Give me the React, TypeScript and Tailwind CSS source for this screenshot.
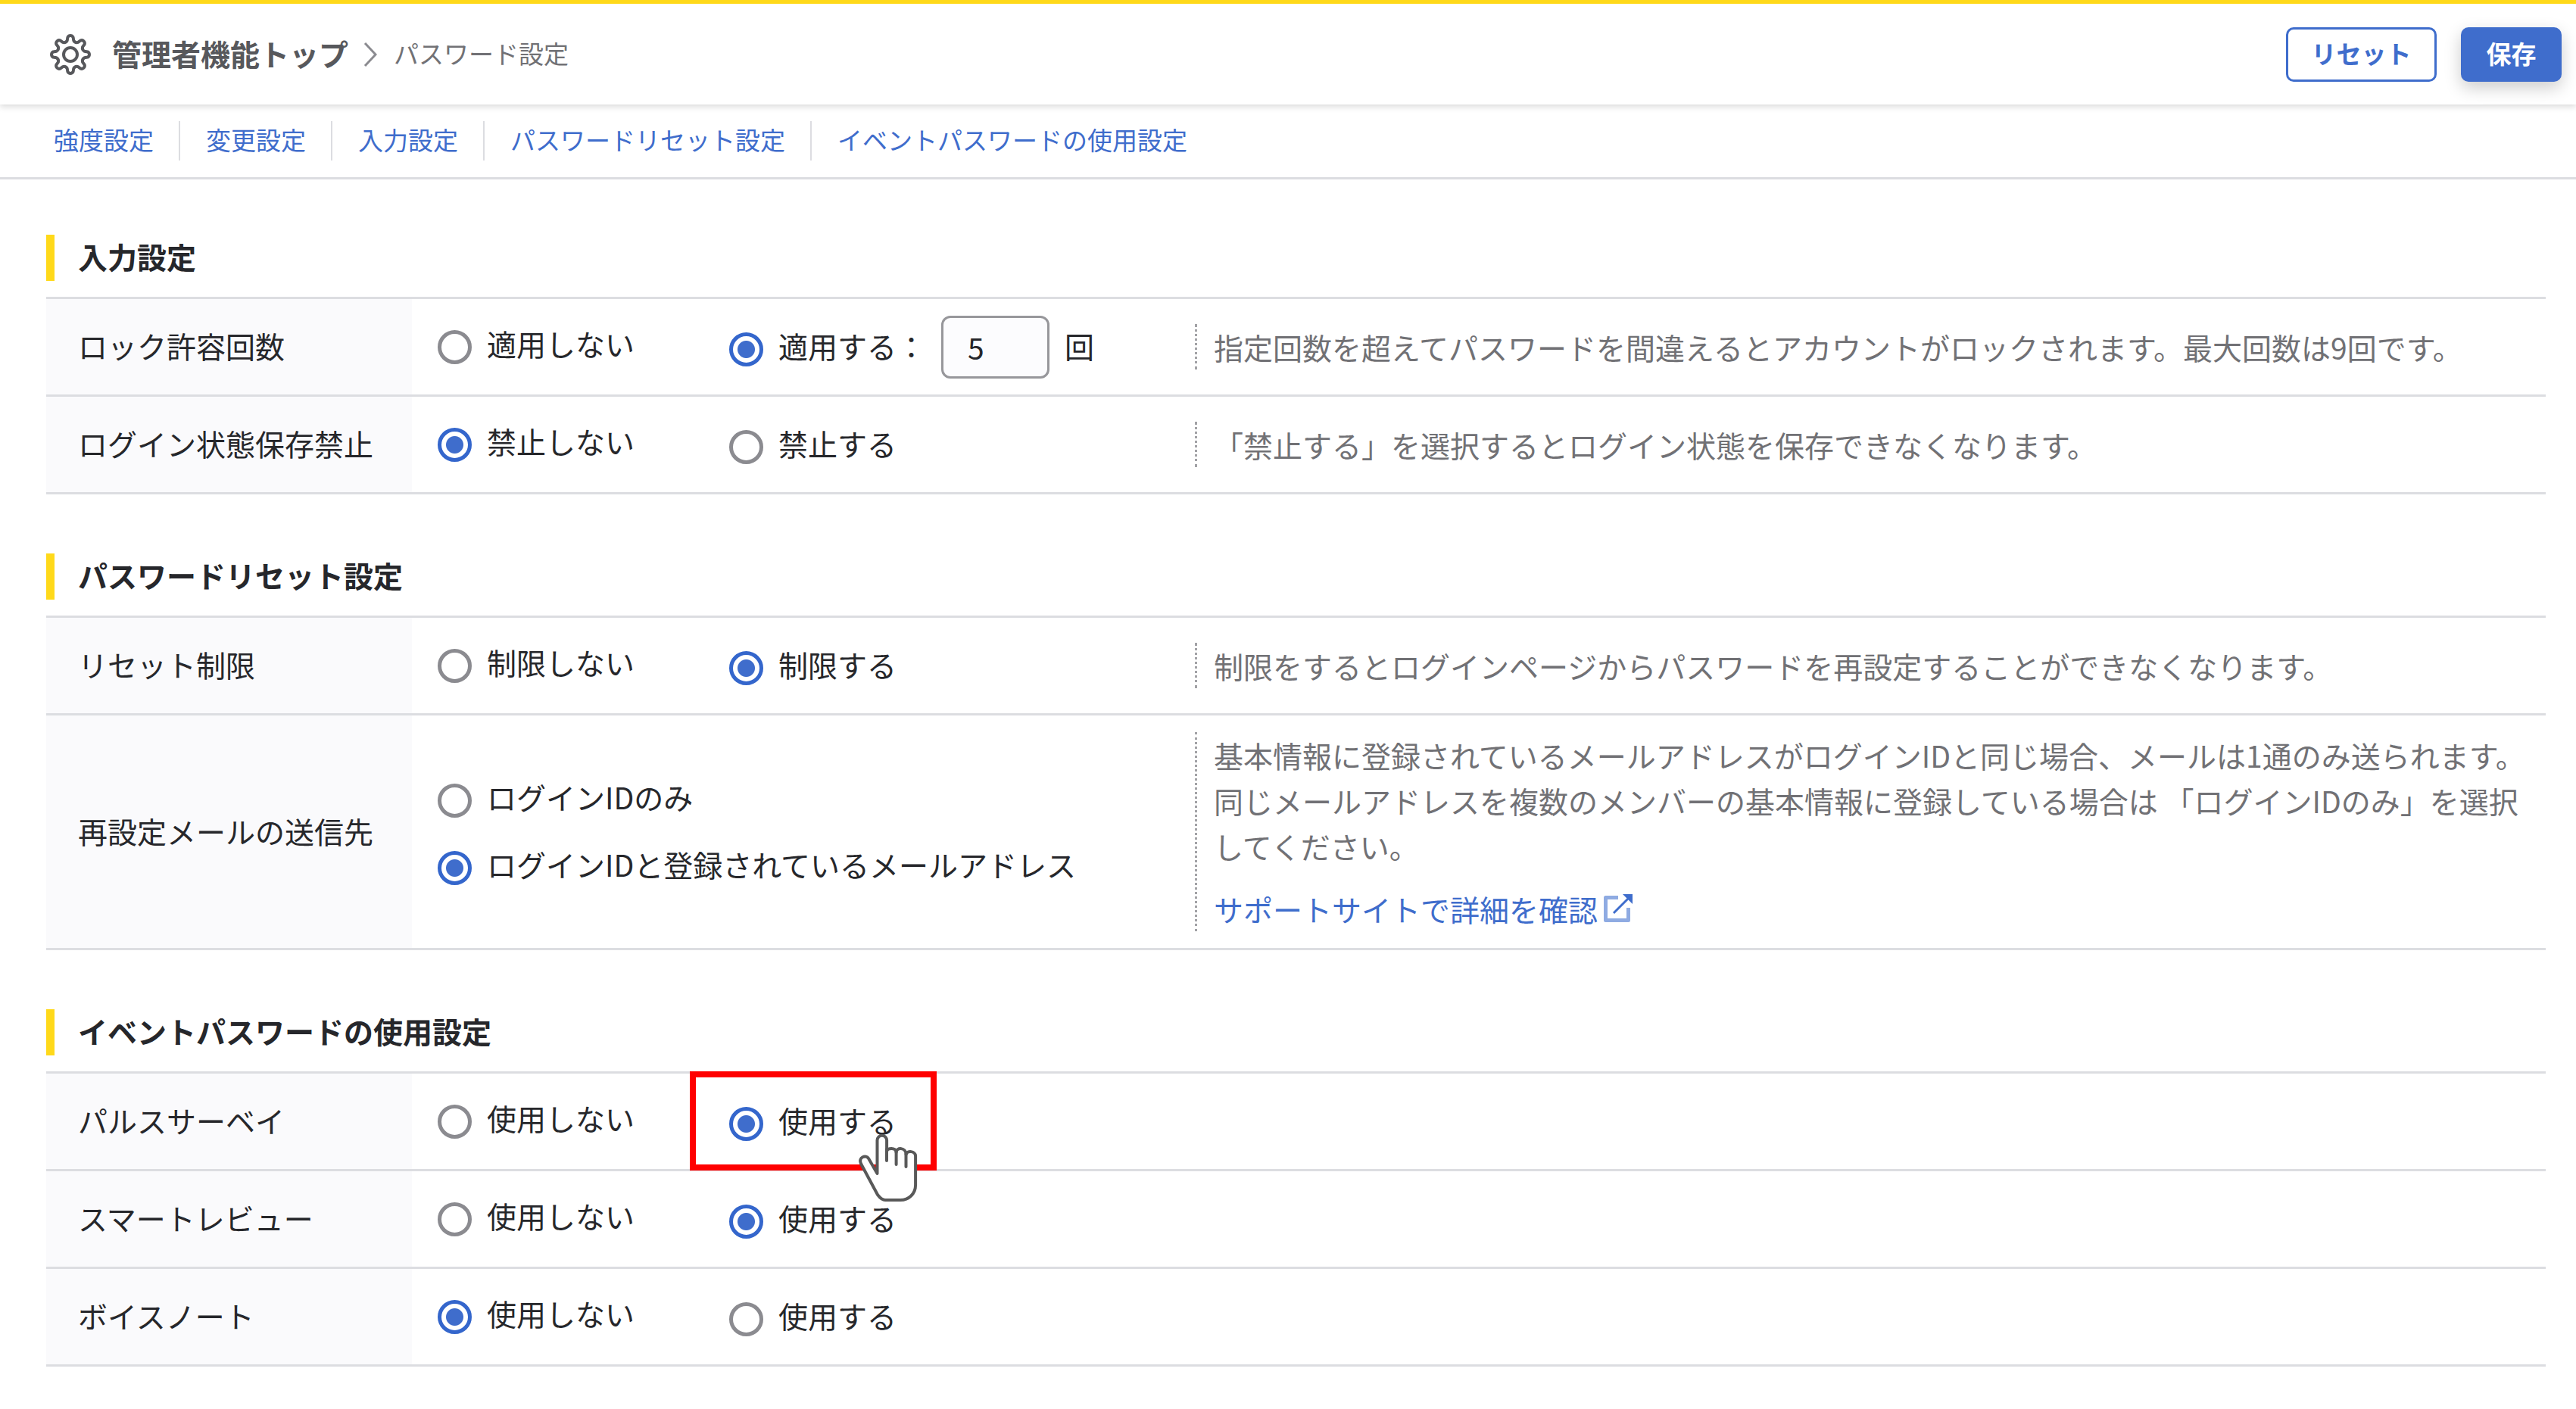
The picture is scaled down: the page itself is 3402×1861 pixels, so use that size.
import React from "react";

type Option = {
  label: string;
  checked?: boolean;
  highlighted?: boolean;
  count?: string;
};

type Row = {
  id: string;
  label: string;
  options: Option[];
  stacked?: boolean;
  help?: string;
  link?: string;
};

type Section = {
  title: string;
  rows: Row[];
};

const navItems = [
  "強度設定",
  "変更設定",
  "入力設定",
  "パスワードリセット設定",
  "イベントパスワードの使用設定",
];

const sections: Section[] = [
  {
    title: "入力設定",
    rows: [
      {
        id: "lock-count",
        label: "ロック許容回数",
        options: [
          { label: "適用しない" },
          { label: "適用する：", checked: true, count: "5" },
        ],
        help: "指定回数を超えてパスワードを間違えるとアカウントがロックされます。最大回数は9回です。",
      },
      {
        id: "keep-login",
        label: "ログイン状態保存禁止",
        options: [{ label: "禁止しない", checked: true }, { label: "禁止する" }],
        help: "「禁止する」を選択するとログイン状態を保存できなくなります。",
      },
    ],
  },
  {
    title: "パスワードリセット設定",
    rows: [
      {
        id: "reset-limit",
        label: "リセット制限",
        options: [{ label: "制限しない" }, { label: "制限する", checked: true }],
        help: "制限をするとログインページからパスワードを再設定することができなくなります。",
      },
      {
        id: "reset-mail",
        label: "再設定メールの送信先",
        stacked: true,
        options: [
          { label: "ログインIDのみ" },
          { label: "ログインIDと登録されているメールアドレス", checked: true },
        ],
        help: "基本情報に登録されているメールアドレスがログインIDと同じ場合、メールは1通のみ送られます。同じメールアドレスを複数のメンバーの基本情報に登録している場合は 「ログインIDのみ」を選択してください。",
        link: "サポートサイトで詳細を確認",
      },
    ],
  },
  {
    title: "イベントパスワードの使用設定",
    rows: [
      {
        id: "pulse-survey",
        label: "パルスサーベイ",
        options: [
          { label: "使用しない" },
          { label: "使用する", checked: true, highlighted: true },
        ],
      },
      {
        id: "smart-review",
        label: "スマートレビュー",
        options: [{ label: "使用しない" }, { label: "使用する", checked: true }],
      },
      {
        id: "voice-note",
        label: "ボイスノート",
        options: [{ label: "使用しない", checked: true }, { label: "使用する" }],
      },
    ],
  },
];

// eight rounded teeth around a 54px box
const point = (radius: number, degrees: number) => {
  const a = (degrees * Math.PI) / 180;
  return `${(27 + radius * Math.sin(a)).toFixed(2)} ${(27 - radius * Math.cos(a)).toFixed(2)}`;
};

const gearPath =
  [0, 45, 90, 135, 180, 225, 270, 315]
    .map(
      (d, i) =>
        `${i === 0 ? "M" : "A5 5 0 0 0 "}${point(19, d - 13)}L${point(23, d - 9)}A4 4 0 0 1 ${point(23, d + 9)}L${point(19, d + 13)}`
    )
    .join("") + `A5 5 0 0 0 ${point(19, -13)}Z`;

const GearIcon = () => (
  <svg viewBox="0 0 54 54" className="size-[54px] shrink-0" fill="none" stroke="#57585c" strokeWidth="4" strokeLinejoin="round">
    <path d={gearPath} />
    <circle cx="27" cy="27" r="9" />
  </svg>
);

const ExternalIcon = () => (
  <svg viewBox="0 0 38 38" className="size-[38px]" fill="none">
    <path d="M19 4.500H2.500v30h30V18" stroke="#8fabe2" strokeWidth="5" strokeLinejoin="round" />
    <path d="M13 25 33 5" stroke="#3f6dcc" strokeWidth="3" />
    <path d="M25 0h13v13z" fill="#3f6dcc" />
  </svg>
);

const HandCursor = () => (
  <svg viewBox="0 0 78 92" className="pointer-events-none absolute top-[47px] left-[171px] z-10 h-[92px] w-[78px]" fill="#fff" stroke="#595959" strokeWidth="4" strokeLinejoin="round" strokeLinecap="round">
    <path d="M24.500 54V10a6.300 6.300 0 0 1 12.600 0v15c0-5 12.500-6 12.500 1 0-7 13-7 13 3 1-6 12.500-5 12.500 2v38c0 12-9 20-20 20H35c-4 0-7-3-10-7L3 41c-4-9 7-12 10-7z" />
    <path d="M37 22v15M49.600 25v17M62.500 28v17" />
  </svg>
);

const RadioOption = ({ row, option, first }: { row: Row; option: Option; first: boolean }) => {
  const id = `${row.id}-${first ? "off" : "on"}`;
  return (
    <div
      className={`relative flex items-center ${
        row.stacked ? "" : first ? "w-[385px] pb-1.5" : ""
      }`}
    >
      <input
        type="radio"
        id={id}
        name={row.id}
        defaultChecked={option.checked}
        className="mt-1.5 size-[45px] shrink-0 appearance-none rounded-full border-[5px] border-[#8b8b90] bg-white checked:border-[#3466cc] checked:bg-[radial-gradient(circle,#3f6dcc_11px,#fff_12px)]"
      />
      <label htmlFor={id} className="pb-1 pl-5">
        {option.label}
      </label>
      {option.count && (
        <>
          <input
            type="text"
            aria-label="回数"
            defaultValue={option.count}
            className="ml-5 h-[83px] w-[143px] rounded-xl border-[3px] border-[#97979b] bg-[#fcfcfe] px-8"
          />
          <span className="pb-1 pl-5">回</span>
        </>
      )}
      {option.highlighted && (
        <>
          <span className="pointer-events-none absolute -top-[34px] -left-[52px] h-[131px] w-[326px] border-8 border-[#ff0000]" />
          <HandCursor />
        </>
      )}
    </div>
  );
};

const SettingRow = ({ row }: { row: Row }) => (
  <div className="flex min-h-[129px] border-b-[3px] border-[#dcdde1]">
    <div id={row.id} className="flex w-[483px] shrink-0 items-center bg-[#fafafc] pb-1 pl-[42px]">
      {row.label}
    </div>
    <div
      role="radiogroup"
      aria-labelledby={row.id}
      className={`flex w-[1034px] shrink-0 pl-[34px] ${
        row.stacked ? "flex-col justify-center gap-[25px]" : "items-center"
      }`}
    >
      {row.options.map((option, i) => (
        <RadioOption key={option.label} row={row} option={option} first={i === 0} />
      ))}
    </div>
    {row.help && (
      <div className="my-[22px] flex flex-1 flex-col justify-center gap-[23px] self-center border-l-3 border-dotted border-[#a2a2a6] pl-[22px] text-[#717175]">
        <p>{row.help}</p>
        {row.link && (
          <a href="#support" className="flex items-center gap-2 text-[#3f6dcc]">
            {row.link}
            <ExternalIcon />
          </a>
        )}
      </div>
    )}
  </div>
);

const App = () => {
  return (
    <div className="min-h-screen bg-white font-['Noto_Sans_CJK_JP',sans-serif] text-[39px] leading-[60px] text-[#26272b]">
      <header className="relative flex h-[138px] items-center justify-between border-t-[5px] border-[#ffd91a] pr-[19px] pl-[66px] shadow-[0_3px_8px_rgba(0,0,0,0.15)]">
        <div className="flex items-center">
          <GearIcon />
          <a href="#top" className="pb-1 pl-7 font-bold text-[#57585c]">
            管理者機能トップ
          </a>
          <svg viewBox="0 0 18 32" className="mr-[22px] ml-5 h-8 w-[18px]" fill="none" stroke="#8b8b90" strokeWidth="3">
            <path d="M2 1 16 16 2 31" />
          </svg>
          <span className="pb-1 text-[33px] text-[#717175]">パスワード設定</span>
        </div>
        <div className="flex gap-8 text-[33px] font-bold">
          <button type="button" className="flex h-[72px] w-[199px] items-center justify-center rounded-[10px] border-[3px] border-[#3f6dcc] pb-1 text-[#3f6dcc]">
            リセット
          </button>
          <button type="button" className="flex h-[72px] w-[133px] items-center justify-center rounded-[10px] bg-[#3f6dcc] pb-1 text-white shadow-[0_8px_22px_rgba(0,0,0,0.2)]">
            保存
          </button>
        </div>
      </header>

      <nav className="flex h-[99px] items-center border-b-[3px] border-[#dcdde1] pl-[37px] text-[33px] text-[#3f6dcc]">
        {navItems.map((item, i) => (
          <a
            key={item}
            href={`#${item}`}
            className={`flex h-[52px] items-center pr-[33px] pb-1 pl-[34px] ${i > 0 ? "border-l-2 border-[#dcdde1]" : ""}`}
          >
            {item}
          </a>
        ))}
      </nav>

      <main className="flex flex-col gap-[78px] pt-[73px] pr-10 pb-12 pl-[61px]">
        {sections.map((section) => (
          <section key={section.title}>
            <h2 className="mb-[21px] border-l-[11px] border-[#ffd91a] pb-1 pl-[31px] leading-[57px] font-bold">
              {section.title}
            </h2>
            <div className="border-t-[3px] border-[#dcdde1]">
              {section.rows.map((row) => (
                <SettingRow key={row.id} row={row} />
              ))}
            </div>
          </section>
        ))}
      </main>
    </div>
  );
};

export default App;
